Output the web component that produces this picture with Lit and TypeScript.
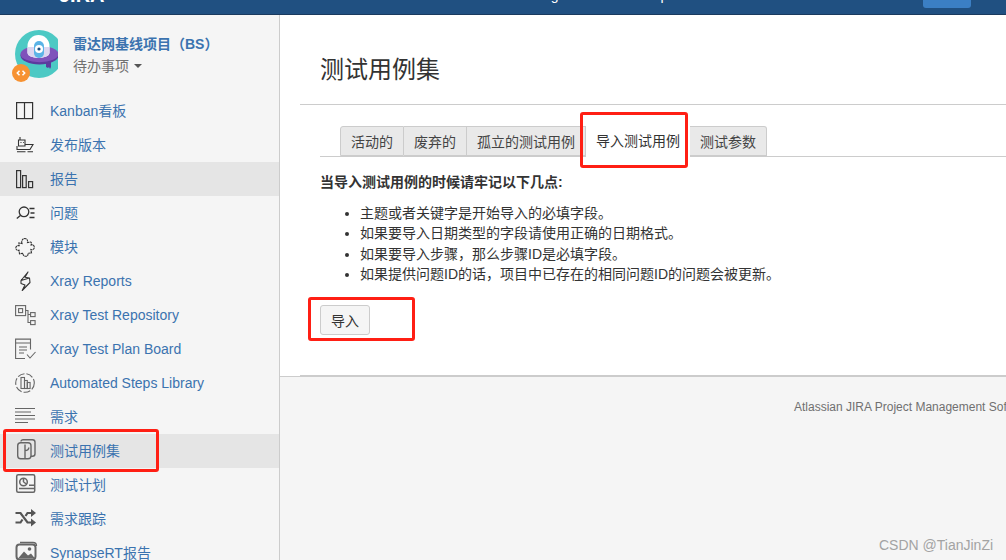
import { LitElement, html, css, svg } from "lit";
import { customElement } from "lit/decorators.js";

const ink = "#333";
const grey = "#666";

const icons: Record<string, unknown> = {
  board: svg`<g fill="none" stroke="${ink}" stroke-width="1.2"><rect x="2.600" y="3.600" width="16" height="16"/><path d="M10.500 3.600v16"/></g>`,
  ship: svg`<g fill="none" stroke="${ink}" stroke-width="1.100"><path d="M6 4v3M4.500 7h6.500v6H4.500zM6.500 9.500h1M9 9.500h.8"/><path d="M3 13v3.500h13l3-5h-8"/><path d="M3 18.800h8.500M13.500 18.800h5.500"/></g>`,
  bars: svg`<g fill="none" stroke="${ink}" stroke-width="1.200"><rect x="2.600" y="3.600" width="4" height="17"/><rect x="8.600" y="8.600" width="3.600" height="12"/><rect x="14.600" y="14.600" width="4" height="6"/></g>`,
  search: svg`<g fill="none" stroke="${ink}" stroke-width="1.300"><circle cx="10" cy="10.800" r="4.800"/><path d="M6.400 14.400l-3.600 3"/><path d="M15.500 7.500h5M16.500 12h4M15.500 16.500h5"/></g>`,
  puzzle: svg`<path fill="none" stroke="${ink}" stroke-width="1.100" stroke-dasharray="2.400 .5" d="M8 8.500c-1-3 1-5 3-5s3 2 2.500 4l3-.5c1 0 1 1 .6 3 2-.6 3.200.6 3.200 2.400s-1.600 2.800-3.400 2.200l.6 3.400-3.500.3c.3 2-.8 3-2.400 3s-2.800-1-2.500-3l-3.600.5-.5-3.500c-2 .5-3.200-.8-3.200-2.300s1.200-2.700 3.400-2.300l-.3-2.700z"/>`,
  bolt: svg`<path fill="none" stroke="${ink}" stroke-width="1.100" stroke-linejoin="round" d="M14 3L7 11.500v3l4 1.500-2.800 5.500L16 13.500l-.5-4.500L11 8.300zM7 11.500l8.500-2.500"/>`,
  tree: svg`<g fill="none" stroke="${grey}" stroke-width="1.100"><rect x="1.600" y="2.600" width="10" height="10"/><rect x="4.600" y="5.600" width="4" height="4"/><rect x="16.600" y="9.600" width="4.500" height="4"/><rect x="16.600" y="17.600" width="4.500" height="4"/><path d="M11.500 7.500h2.500v12h2.600M14 11.500h2.600"/></g>`,
  doc: svg`<g fill="none" stroke="${grey}" stroke-width="1.100"><path d="M16.500 12.500V2.100H1.600v19.400H11"/><path d="M1.600 6h15M5 10h8M5 13h8M5 16h5"/><path d="M13 17.500l3 3.500 5.500-6"/></g>`,
  lib: svg`<g fill="none" stroke="${grey}" stroke-width="1.100"><circle cx="11" cy="12" r="9.300" stroke-dasharray="7 2"/><rect x="7" y="6.500" width="3.500" height="11"/><rect x="10.500" y="9.500" width="2.800" height="8"/><rect x="13.300" y="11.500" width="2.800" height="6"/></g>`,
  lines: svg`<g stroke="${grey}" stroke-width="1.200"><path d="M1 3.500h20M1 7h16M1 10.500h20M1 14h20M1 17.500h13"/></g>`,
  set: svg`<g fill="none" stroke="${grey}" stroke-width="1.400"><path d="M7 2.500c0-1 1-1.800 2-1.800h9.500c1.400 0 2.500 1.100 2.500 2.500v11.500c0 1.400-1 2.500-2.500 2.500H17"/><rect x="3.700" y="3.700" width="13.300" height="16" rx="3"/><path d="M11 5.500v14M11 11.500c3 0 3.800-1.300 3.800-3"/></g>`,
  plan: svg`<g fill="none" stroke="${grey}" stroke-width="1.500"><rect x="2.700" y="1.700" width="18" height="17.500" rx="1.500"/><circle cx="9.500" cy="9" r="3.800"/><path d="M9.500 9V5.200M9.500 9l3 2M15 12.300h5M5 15.500h15"/></g>`,
  shuffle: svg`<g fill="none" stroke="#555" stroke-width="2.200"><path d="M1.500 6h5l7 9.500h4M1.500 15.500h5l2-3M11.500 9l2-3h4"/></g><path fill="#555" d="M17 2l5 4-5 4zM17 11.500l5 4-5 4z"/>`,
  pic: svg`<g fill="none" stroke="${grey}" stroke-width="2"><rect x="2.500" y="3.500" width="19" height="15" rx="3"/></g><path fill="${grey}" d="M4 17.500l6-7 4 4 3-2 4 5z"/><circle cx="15.500" cy="8" r="1.800" fill="${grey}"/><path fill="none" stroke="${grey}" stroke-width="1.300" d="M6 1.500h13c2 0 3.500 1.500 3.500 3.500"/>`,
};

const rows: [string, string, boolean?][] = [
  ["board", "Kanban看板"],
  ["ship", "发布版本"],
  ["bars", "报告", true],
  ["search", "问题"],
  ["puzzle", "模块"],
  ["bolt", "Xray Reports"],
  ["tree", "Xray Test Repository"],
  ["doc", "Xray Test Plan Board"],
  ["lib", "Automated Steps Library"],
  ["lines", "需求"],
  ["set", "测试用例集", true],
  ["plan", "测试计划"],
  ["shuffle", "需求跟踪"],
  ["pic", "SynapseRT报告"],
];

const tabs = ["活动的", "废弃的", "孤立的测试用例", "导入测试用例", "测试参数"];
const points = [
  "主题或者关键字是开始导入的必填字段。",
  "如果要导入日期类型的字段请使用正确的日期格式。",
  "如果要导入步骤，那么步骤ID是必填字段。",
  "如果提供问题ID的话，项目中已存在的相同问题ID的问题会被更新。",
];

const hasCjk = (s: string) => /[\u4e00-\u9fff]/.test(s);

@customElement("app-root")
export class AppRoot extends LitElement {
  static styles = css`
    :host {
      display: block;
      position: relative;
      width: 100%;
      height: 560px;
      overflow: hidden;
      font-family: "Liberation Sans", "Noto Sans CJK SC", sans-serif;
      font-size: 14px;
      color: #333;
      background: #f5f5f5;
    }
    .top {
      height: 14px;
      border-bottom: 1px solid #1a3a5e;
      background: #205081;
      display: flex;
      align-items: flex-end;
      overflow: hidden;
      color: #fff;
    }
    .logo {
      margin: 0 0 9px 59px;
      font-size: 20px;
      font-weight: 700;
      line-height: 20px;
    }
    .navs {
      margin: 0 0 9px 426px;
      display: flex;
      gap: 63px;
      line-height: 20px;
    }
    .create {
      margin: 0 35px 6px auto;
      width: 48px;
      height: 20px;
      flex: none;
      background: #3b7fc4;
      border-radius: 3px;
    }
    .body {
      display: flex;
      height: 545px;
    }
    .side {
      width: 279px;
      flex: none;
      border-right: 1px solid #ccc;
      overflow: hidden;
    }
    .head {
      height: 79px;
      padding: 15px 0 0 15px;
      box-sizing: border-box;
      display: flex;
      gap: 15px;
    }
    .avatar {
      display: block;
      flex: none;
      margin-left: -5px;
    }
    .pname {
      margin-top: 5px;
      font-size: 14px;
      font-weight: 700;
      line-height: 18px;
      color: #3b73af;
      white-space: nowrap;
    }
    .ptype {
      margin-top: 3px;
      line-height: 20px;
      font-size: 14px;
      color: #707070;
      display: flex;
      align-items: center;
      gap: 5px;
    }
    .caret {
      width: 0;
      height: 0;
      border: 4px solid transparent;
      border-top-color: #555;
      border-bottom: 0;
    }
    .row {
      height: 34px;
      display: flex;
      align-items: center;
      gap: 12px;
      padding-left: 14px;
      color: #3b73af;
      white-space: nowrap;
    }
    .row.on {
      background: #e5e5e5;
    }
    .row.cjk span {
      margin-bottom: 2px;
    }
    .row svg {
      flex: none;
      width: 24px;
      height: 24px;
    }
    .main {
      flex: 1;
      min-width: 0;
      overflow: hidden;
    }
    .panel {
      height: 361px;
      background: #fff;
      border-bottom: 1px solid #ccc;
      padding-left: 20px;
    }
    .title {
      height: 90px;
      box-sizing: border-box;
      border-bottom: 1px solid #ccc;
      padding: 38px 0 0 20px;
      margin: 0;
      font-size: 24px;
      font-weight: 400;
      line-height: 34px;
    }
    .content {
      height: 249px;
      border-bottom: 1px solid #ccc;
      padding: 21px 0 0 20px;
    }
    .tabs {
      height: 30px;
      border-bottom: 1px solid #ccc;
      display: flex;
      padding-left: 20px;
    }
    .tab {
      height: 30px;
      box-sizing: border-box;
      padding: 0 10px;
      line-height: 31px;
      background: #e9e9e9;
      color: #444;
      border: 1px solid #ccc;
      border-left: 0;
      white-space: nowrap;
    }
    .tab:first-child {
      border-left: 1px solid #ccc;
      border-top-left-radius: 3px;
    }
    .tab:last-child {
      border-top-right-radius: 3px;
    }
    .tab.on {
      height: 31px;
      background: #fff;
      border: 0;
      color: #333;
    }
    .note {
      margin: 15px 0 0;
      font-weight: 700;
      line-height: 20px;
    }
    ul {
      margin: 11px 0 0;
      padding: 0 0 0 40px;
      line-height: 20.300px;
    }
    button {
      display: block;
      margin: 21px 0 0;
      width: 50px;
      height: 30px;
      padding: 0;
      font: inherit;
      color: #333;
      background: #f5f5f5;
      border: 1px solid #ccc;
      border-radius: 3px;
    }
    .foot {
      padding: 22px 0 0 514px;
      font-size: 12px;
      line-height: 16px;
      color: #707070;
      white-space: nowrap;
    }
    .mark {
      position: absolute;
      box-sizing: border-box;
      border: 3px solid #ff1f14;
      border-radius: 3px;
    }
    .m-side {
      left: 3px;
      top: 429px;
      width: 156px;
      height: 43px;
    }
    .m-tab {
      left: 580px;
      top: 112px;
      width: 108px;
      height: 56px;
    }
    .m-btn {
      left: 308px;
      top: 297px;
      width: 107px;
      height: 44px;
    }
    .wm {
      position: absolute;
      left: 879px;
      top: 537px;
      font-size: 14px;
      line-height: 16px;
      color: #a3a3a3;
    }
  `;

  render() {
    return html`
      <div class="top">
        <span class="logo">JIRA</span>
        <div class="navs"><span>Plugins</span><span>Help</span></div>
        <span class="create"></span>
      </div>
      <div class="body">
        <aside class="side">
          <div class="head">
            <svg class="avatar" width="48" height="60" viewBox="0 0 48 60">
              <circle cx="29" cy="24" r="24" fill="#4cc9c4" />
              <path d="M36 32h5v5l-1 2-1-2-1 1-2-1z" fill="#5c3a9e" />
              <ellipse cx="29.500" cy="25.500" rx="19" ry="9" fill="#5c3a9e" />
              <ellipse cx="29.500" cy="24" rx="19" ry="8.300" fill="#7f52bb" />
              <path d="M17.500 16a11 11 0 0 1 22 0v7a11 5 0 0 1-22 0z" fill="#fff" />
              <path d="M17.500 17h22v6a11 5 0 0 1-22 0z" fill="#dcd6f0" />
              <rect x="24" y="11" width="10" height="17" rx="5" fill="#5bb3e6" />
              <circle cx="29" cy="19" r="4" fill="#fff" />
              <circle cx="29" cy="19" r="1.600" fill="#1f4f7f" />
              <circle cx="11" cy="43" r="9" fill="#f79232" />
              <path d="M9.500 40.800L7.300 43l2.200 2.200M12.500 40.800l2.200 2.200-2.200 2.200" fill="none" stroke="#fff" stroke-width="1.500" />
            </svg>
            <div>
              <div class="pname">雷达网基线项目（BS）</div>
              <div class="ptype">待办事项<span class="caret"></span></div>
            </div>
          </div>
          ${rows.map(
            ([icon, label, on]) => html`<div class="row ${on ? "on" : ""} ${hasCjk(label) ? "cjk" : ""}">
              <svg viewBox="0 0 24 24">${icons[icon]}</svg><span>${label}</span>
            </div>`
          )}
        </aside>
        <main class="main">
          <div class="panel">
            <h1 class="title">测试用例集</h1>
            <div class="content">
              <div class="tabs">
                ${tabs.map((t, i) => html`<div class="tab ${i === 3 ? "on" : ""}">${t}</div>`)}
              </div>
              <p class="note">当导入测试用例的时候请牢记以下几点:</p>
              <ul>
                ${points.map((p) => html`<li>${p}</li>`)}
              </ul>
              <button>导入</button>
            </div>
          </div>
          <div class="foot">Atlassian JIRA Project Management Software</div>
        </main>
      </div>
      <div class="mark m-side"></div>
      <div class="mark m-tab"></div>
      <div class="mark m-btn"></div>
      <div class="wm">CSDN @TianJinZi</div>
    `;
  }
}
